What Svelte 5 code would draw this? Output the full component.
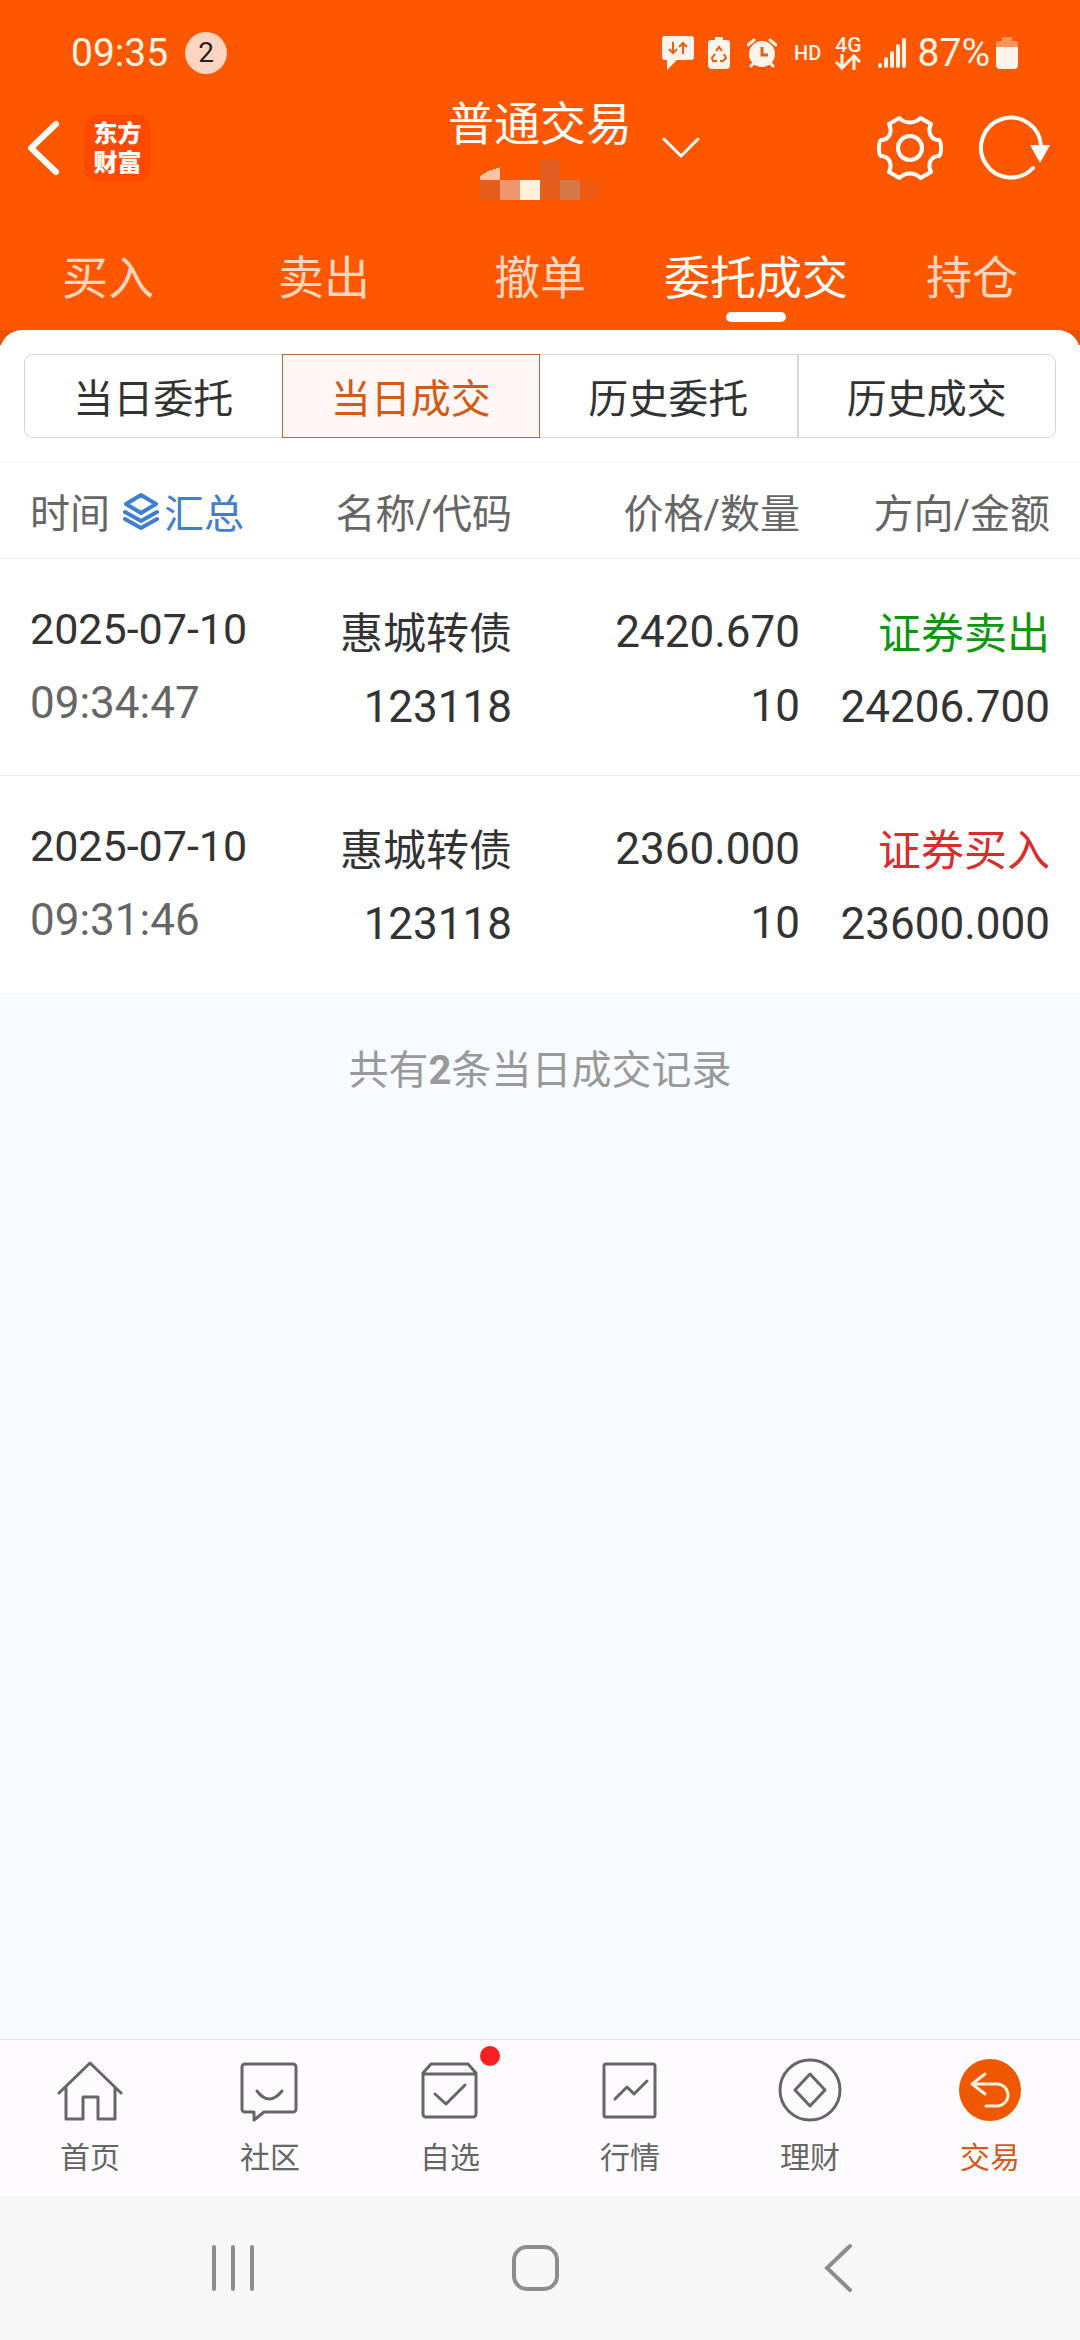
<script>
  // Today's deals page of the trading section

  let activeTab = 3;
  let activeFilter = 1;
  let activeNav = 5;

  const tabs = ['买入', '卖出', '撤单', '委托成交', '持仓'];
  const filters = ['当日委托', '当日成交', '历史委托', '历史成交'];
  const nav = ['首页', '社区', '自选', '行情', '理财', '交易'];

  const deals = [
    { date: '2025-07-10', time: '09:34:47', name: '惠城转债', code: '123118', price: '2420.670', qty: '10', side: 'sell', label: '证券卖出', amount: '24206.700' },
    { date: '2025-07-10', time: '09:31:46', name: '惠城转债', code: '123118', price: '2360.000', qty: '10', side: 'buy', label: '证券买入', amount: '23600.000' }
  ];
</script>

<div class="page">
  <header>
    <div class="status">
      <span class="clock">09:35</span>
      <span class="count">2</span>
      <div class="status-icons">
        <svg width="32" height="34" viewBox="0 0 32 34">
          <path d="M3 0h26a3 3 0 0 1 3 3v18a3 3 0 0 1-3 3H15L5 34V24H3a3 3 0 0 1-3-3V3a3 3 0 0 1 3-3z" fill="#fff3ec" />
          <path d="M11 6v11M7 13l4 4 4-4M21 18V7M17 11l4-4 4 4" fill="none" stroke="#e0601c" stroke-width="2" />
        </svg>
        <svg class="saver" width="22" height="32" viewBox="0 0 22 32">
          <path d="M7 0h8v3h4a3 3 0 0 1 3 3v22a4 4 0 0 1-4 4H4a4 4 0 0 1-4-4V6a3 3 0 0 1 3-3h4z" fill="#fff3ec" />
          <path d="M8 14l3-4 3 4M16 17l2 4-3 3M12 24h3M9 24H5l-1-3 3-4" fill="none" stroke="#e0601c" stroke-width="2" />
        </svg>
        <svg class="alarm" width="30" height="30" viewBox="0 0 30 30">
          <circle cx="15" cy="16" r="13" fill="#fff3ec" />
          <path d="M1 7l6-5M29 7l-6-5M4 28l4-4M26 28l-4-4" stroke="#fff3ec" stroke-width="3" stroke-linecap="round" />
          <path d="M15 9v8h6" fill="none" stroke="#e0601c" stroke-width="3" />
        </svg>
        <span class="hd">HD</span>
        <span class="net">
          4G
          <svg width="26" height="16" viewBox="0 0 26 16" fill="none" stroke="#fff3e4" stroke-width="3">
            <path d="M7 0v14M1 8l6 6 6-6M19 16V2M13 8l6-6 6 6" />
          </svg>
        </span>
        <svg class="signal" width="28" height="30" viewBox="0 0 28 30" stroke="#fff3e4" stroke-width="4" stroke-linecap="round">
          <path d="M2 27v1M8 21v7M14 15v13M20 8v20M26 2v26" />
        </svg>
        <span class="percent">87%</span>
        <svg class="battery" width="22" height="32" viewBox="0 0 22 32">
          <path d="M6 0h10v4h4a2 2 0 0 1 2 2v5H0V6a2 2 0 0 1 2-2h4z" fill="#ff935c" />
          <path d="M0 10h22v18a4 4 0 0 1-4 4H4a4 4 0 0 1-4-4z" fill="#fff3ec" />
        </svg>
      </div>
    </div>

    <div class="bar">
      <div class="bar-left">
        <button aria-label="返回">
          <svg width="32" height="56" viewBox="2 0 32 56" fill="none" stroke="#fff" stroke-width="6" stroke-linecap="round">
            <path d="M30 4L5 28l25 24" />
          </svg>
        </button>
        <div class="logo">东方<br />财富</div>
      </div>
      <div class="account">
        <h1>普通交易</h1>
        <!-- masked account number -->
        <svg width="120" height="40" viewBox="0 0 120 40" shape-rendering="crispEdges">
          <path d="M0 16l8-5 12-4v13H0z" fill="#ffc3a3" />
          <path d="M60 0h20v20H60z" fill="#e25e20" />
          <path d="M0 20h20v20H0z" fill="#e55e1b" />
          <path d="M20 20h20v20H20z" fill="#ee956c" />
          <path d="M40 20h20v20H40z" fill="#fff0dc" />
          <path d="M60 20h20v20H60z" fill="#e55e1b" />
          <path d="M80 20h20v20H80z" fill="#d67845" />
          <path d="M100 20h20v20h-20z" fill="#ef5a12" />
        </svg>
      </div>
      <div class="bar-right">
        <button aria-label="切换账户">
          <svg width="38" height="22" viewBox="0 0 38 22" fill="none" stroke="#fff" stroke-width="3" stroke-linecap="round">
            <path d="M2 2l17 17L36 2" />
          </svg>
        </button>
        <button class="gear" aria-label="设置">
          <svg width="66" height="64" viewBox="0 0 66 64" fill="none" stroke="#fff" stroke-width="4" stroke-linejoin="round">
            <path d="M22.500 2L12 8C16 16 12 24 4 24Q2 25 2 32T4 40C12 40 16 48 12 56L22.500 62C28 56 38 56 43.500 62L54 56C50 48 54 40 62 40Q64 39 64 32T62 24C54 24 50 16 54 8L43.500 2C38 8 28 8 22.500 2z" />
            <circle cx="33" cy="32" r="12" />
          </svg>
        </button>
        <button aria-label="刷新">
          <svg width="74" height="66" viewBox="0 0 74 66">
            <path d="M63 31A30 30 0 1 0 55 53" fill="none" stroke="#fff" stroke-width="4" stroke-linecap="round" />
            <path d="M52 30h20L62 48z" fill="#fff" />
          </svg>
        </button>
      </div>
    </div>

    <nav class="tabs">
      {#each tabs as tab, i}
        <button class:active={i === activeTab} on:click={() => (activeTab = i)}>{tab}</button>
      {/each}
    </nav>
  </header>

  <main>
    <div class="panel">
      <div class="filters">
        {#each filters as filter, i}
          <button class:active={i === activeFilter} on:click={() => (activeFilter = i)}>{filter}</button>
        {/each}
      </div>

      <table>
        <thead>
          <tr>
            <th class="when">
              <div class="head">
                时间
                <button class="summary">
                  <svg width="36" height="38" viewBox="0 0 36 38" fill="none" stroke="#3f7fd0" stroke-width="4" stroke-linejoin="round" stroke-linecap="round">
                    <path d="M18 3l15 9-15 9-15-9zM2 20l16 9 16-9M2 27l16 9 16-9" />
                  </svg>汇总
                </button>
              </div>
            </th>
            <th class="stock">名称/代码</th>
            <th class="price">价格/数量</th>
            <th class="amount">方向/金额</th>
          </tr>
        </thead>
        <tbody>
          {#each deals as deal}
            <tr>
              <td class="when"><div class="date">{deal.date}</div><div class="time">{deal.time}</div></td>
              <td class="stock"><div class="cjk">{deal.name}</div><div>{deal.code}</div></td>
              <td class="price"><div>{deal.price}</div><div>{deal.qty}</div></td>
              <td class="amount"><div class="cjk {deal.side}">{deal.label}</div><div>{deal.amount}</div></td>
            </tr>
          {/each}
        </tbody>
      </table>
    </div>

    <p class="total">共有<b>{deals.length}</b>条当日成交记录</p>
  </main>

  <nav class="bottom">
    {#each nav as label, i}
      <button class:active={i === activeNav} on:click={() => (activeNav = i)}>
        <span class="icon">
          <svg width="66" height="66" viewBox="0 0 66 66" fill="none" stroke="#666" stroke-width="3" stroke-linejoin="round" stroke-linecap="round">
            {#if i === 0}
              <path d="M2 36L33 6l31 30M9 30v32h17V40h15v22h17V30" />
            {:else if i === 1}
              <path d="M8 7h48a3 3 0 0 1 3 3v42a3 3 0 0 1-3 3H27l-10 8v-8H8a3 3 0 0 1-3-3V10a3 3 0 0 1 3-3z" />
              <path d="M20 34q12 16 25 0" />
            {:else if i === 2}
              <path d="M6 16l8-9h37l8 9v41a3 3 0 0 1-3 3H9a3 3 0 0 1-3-3zM6 17h53M18 37l11 10 19-19" />
            {:else if i === 3}
              <rect x="7" y="7" width="51" height="53" rx="2" />
              <path d="M18 42l12-12 7 7 13-13" />
            {:else if i === 4}
              <circle cx="33" cy="33" r="30" />
              <path d="M33 17l15 16-15 16-15-16z" />
            {:else}
              <circle cx="33" cy="33" r="31" fill="#ef5700" stroke="none" />
              <path d="M28 17L15 27l13 10M16 27h24a11 11 0 0 1 0 22H29" stroke="#ffeedd" />
            {/if}
          </svg>
          {#if i === 2}<i class="dot"></i>{/if}
        </span>
        {label}
      </button>
    {/each}
  </nav>

  <div class="system">
    <button aria-label="最近任务">
      <svg width="46" height="50" viewBox="0 0 46 50" stroke="#8c8e8c" stroke-width="4" stroke-linecap="round">
        <path d="M4 4v42M23 4v42M42 4v42" />
      </svg>
    </button>
    <button aria-label="主屏幕">
      <svg width="50" height="50" viewBox="0 0 50 50" fill="none" stroke="#8c8e8c" stroke-width="4">
        <rect x="4" y="4" width="43" height="42" rx="13" />
      </svg>
    </button>
    <button aria-label="后退">
      <svg width="32" height="52" viewBox="0 0 32 52" fill="none" stroke="#8c8e8c" stroke-width="4" stroke-linecap="round">
        <path d="M28 4L5 26l23 22" />
      </svg>
    </button>
  </div>
</div>

<style>
  :global(body) {
    margin: 0;
  }

  .page {
    min-height: 100vh;
    display: flex;
    flex-direction: column;
    background: #f7faff;
    color: #333;
    font-family: Roboto, "Noto Sans CJK SC", sans-serif;
  }
  button { margin: 0; padding: 0; border: none; background: none; color: inherit; font: inherit; cursor: pointer; }
  svg { display: block; flex: none; }

  header { background: #ff5700; color: #fff; border-bottom: 15px solid #e85200; }

  .status { display: flex; align-items: center; box-sizing: border-box; height: 96px; padding: 10px 62px 0 71px; color: #fff3e4; }
  .clock, .percent { font-size: 39px; line-height: 44px; }
  .count { width: 42px; height: 42px; margin-left: 17px; border-radius: 50%; background: #ffd5c2; color: #222; font-size: 28px; line-height: 42px; text-align: center; }
  .status-icons { display: flex; align-items: center; margin-left: auto; }
  .saver { margin-left: 14px; }
  .alarm { margin-left: 17px; }
  .hd { margin-left: 17px; font-size: 20px; font-weight: 500; }
  .net { margin-left: 14px; font-size: 21px; line-height: 18px; font-weight: 500; }
  .signal { margin-left: 16px; }
  .percent { margin-left: 12px; }
  .battery { margin-left: 6px; }

  .bar { display: grid; grid-template-columns: 1fr auto 1fr; align-items: center; height: 104px; padding: 0 28px; }
  .bar-left { display: flex; align-items: center; gap: 24px; }
  .logo { width: 67px; height: 67px; box-sizing: border-box; padding-top: 5px; border-radius: 14px; background: #ff4800; font-size: 24px; line-height: 29px; font-weight: 900; text-align: center; }
  .account { display: flex; flex-direction: column; align-items: center; gap: 8px; }
  .account h1 { margin: 0; font-size: 46px; line-height: 56px; font-weight: 400; }
  .bar-right { display: flex; align-items: center; padding-left: 30px; }
  .gear { margin: 0 35px 0 auto; }

  .tabs { display: flex; height: 130px; }
  .tabs button { position: relative; flex: 1; padding-top: 26px; font-size: 46px; line-height: 60px; color: #ffd5bd; }
  .tabs .active { color: #fff; }
  .tabs .active::after { content: ""; position: absolute; left: 50%; bottom: 8px; width: 60px; height: 10px; margin-left: -30px; border-radius: 5px; background: #fff; }

  main { flex: 1; }
  .panel { position: relative; margin-top: -15px; border-radius: 22px 22px 0 0; background: #fff; }

  .filters { display: flex; padding: 24px; border-bottom: 1px solid #fafafa; }
  .filters button { box-sizing: border-box; flex: 1; height: 84px; padding-top: 8px; border: 1px solid #d5d5d9; font-size: 40px; line-height: 60px; }
  .filters button:first-child { border-radius: 9px 0 0 9px; border-right: none; }
  .filters button:last-child { border-radius: 0 9px 9px 0; }
  .filters .active { border-color: #b8693a; background: #fff6f6; color: #d45a17; }
  .filters .active + button { border-left: none; }

  table { width: 100%; border-collapse: collapse; table-layout: fixed; }
  th { height: 95px; padding: 0; border-bottom: 1px solid #ebebeb; color: #666; font-size: 40px; font-weight: 400; text-align: right; }
  td { box-sizing: border-box; height: 217px; padding: 4px 0 0; font-size: 44px; line-height: 74px; text-align: right; }
  tr + tr td { border-top: 1px solid #ebebeb; }
  .when { width: 300px; box-sizing: border-box; padding-left: 30px; text-align: left; }
  .stock { width: 212px; }
  .price { width: 288px; }
  .amount { padding-right: 30px; }
  td.when { padding-bottom: 6px; }
  .head, .summary { display: flex; align-items: center; }
  .head { gap: 13px; }
  .summary { gap: 5px; color: #3f7fd0; }
  .date { font-size: 43px; }
  .time { color: #666; }
  .cjk { padding-top: 4px; font-size: 43px; line-height: 72px; }
  .sell { color: #0e960e; }
  .buy { color: #d92c2c; }

  .total { margin: 48px 0; color: #999; font-size: 40px; line-height: 60px; text-align: center; }

  .bottom { display: flex; border-top: 1px solid #e2e2e6; background: #fefbfe; }
  .bottom button { flex: 1; display: flex; flex-direction: column; align-items: center; gap: 15px; height: 156px; padding-top: 17px; box-sizing: border-box; color: #666; font-size: 30px; line-height: 40px; }
  .bottom .active { color: #d45a17; }
  .icon { position: relative; }
  .dot { position: absolute; top: -11px; right: -17px; width: 20px; height: 20px; border-radius: 50%; background: #f82020; }

  .system { display: flex; height: 144px; padding: 0 91px 0 82px; background: #f7f7f7; }
  .system button { flex: 1; display: flex; align-items: center; justify-content: center; }
</style>
